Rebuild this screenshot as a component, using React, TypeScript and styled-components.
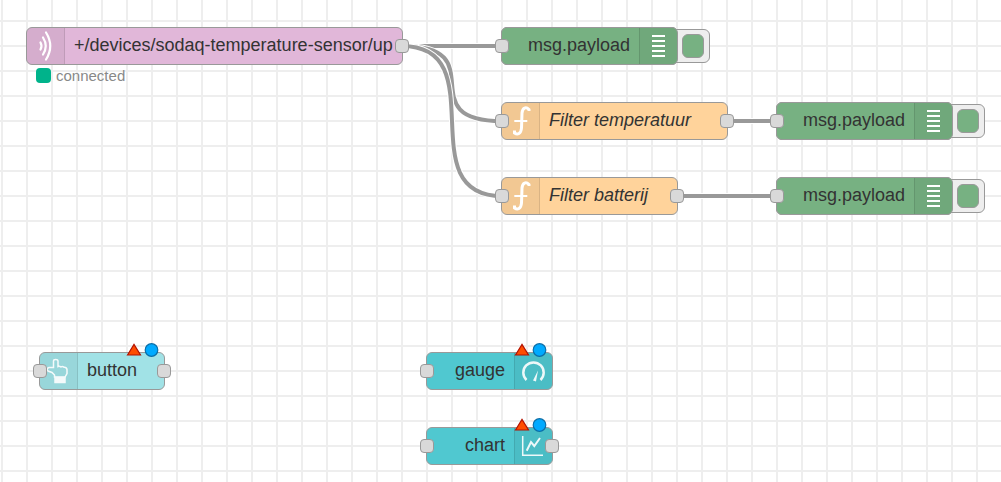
import React from 'react';
import styled, { createGlobalStyle, css } from 'styled-components';

const GlobalStyle = createGlobalStyle`
  html, body, #root { height: 100%; }
  body { margin: 0; background: #fff; }
  * { box-sizing: border-box; }
`;

const Workspace = styled.main`
  position: relative;
  min-height: 100%;
  overflow: hidden;
  font-family: "Liberation Sans", Arial, sans-serif;
  background-color: #fff;
  background-image:
    linear-gradient(to right, #eee 2px, transparent 2px),
    linear-gradient(to bottom, #eee 2px, transparent 2px);
  background-size: 25px 25px;
  background-position: 1px 20px;
`;

const Wires = styled.svg`
  position: absolute;
  inset: 0;
  width: 100%;
  height: 100%;
  fill: none;
`;

const NodeBox = styled.div<{ $x: number; $y: number; $w: number; $color: string }>`
  position: absolute;
  left: ${(p) => p.$x}px;
  top: ${(p) => p.$y}px;
  width: ${(p) => p.$w}px;
  height: 38px;
  display: flex;
  border: 1px solid #999;
  border-radius: 6px;
  background: ${(p) => p.$color};
`;

const IconPanel = styled.div<{ $right?: boolean }>`
  width: 38px;
  flex: none;
  display: flex;
  background: rgba(0, 0, 0, 0.05);
  order: ${(p) => (p.$right ? 1 : 0)};
  ${(p) =>
    p.$right
      ? css`box-shadow: inset 1px 0 rgba(0, 0, 0, 0.1); border-radius: 0 5px 5px 0;`
      : css`box-shadow: inset -1px 0 rgba(0, 0, 0, 0.1); border-radius: 5px 0 0 5px;`}
`;

const Glyph = styled.svg`
  display: block;
  width: 38px;
  height: 36px;
  fill: none;
  stroke: #fff;
`;

const Label = styled.span<{ $right?: boolean; $italic?: boolean }>`
  flex: 1;
  padding: 0 9px;
  line-height: 34px;
  font-size: 18px;
  color: #333;
  white-space: nowrap;
  text-align: ${(p) => (p.$right ? 'right' : 'left')};
  font-style: ${(p) => (p.$italic ? 'italic' : 'normal')};
`;

const Port = styled.span<{ $side: 'in' | 'out' }>`
  position: absolute;
  top: 11px;
  ${(p) => (p.$side === 'in' ? 'left: -7px;' : 'right: -7px;')}
  width: 14px;
  height: 14px;
  border: 1px solid #999;
  border-radius: 4px;
  background: #d9d9d9;
`;

const ToggleTab = styled.div`
  position: absolute;
  left: calc(100% - 6px);
  top: 1px;
  width: 39px;
  height: 34px;
  display: flex;
  justify-content: flex-end;
  align-items: center;
  padding-right: 5px;
  border: 1px solid #999;
  border-radius: 6px;
  background: #eee;
`;

const ToggleButton = styled.button<{ $color: string }>`
  width: 22px;
  height: 24px;
  padding: 0;
  border: 1px solid #999;
  border-radius: 6px;
  background: ${(p) => p.$color};
`;

const Badges = styled.svg`
  position: absolute;
  right: 4px;
  top: -11px;
  width: 34px;
  height: 16px;
`;

const Status = styled.div`
  position: absolute;
  left: 9px;
  top: 39px;
  display: flex;
  align-items: center;
  gap: 5px;
  font-size: 15px;
  line-height: 17px;
  color: #888;
  &::before {
    content: '';
    width: 15px;
    height: 15px;
    border-radius: 4px;
    background: #00b38b;
  }
`;

type IconName = 'mqtt' | 'debug' | 'function' | 'button' | 'gauge' | 'chart';

const icons: Record<IconName, React.ReactNode> = {
  mqtt: (
    <g strokeWidth="2.2" strokeLinecap="round">
      <path d="M13.5 14.5q2 3.500 0 7" />
      <path d="M16 9.500q5.500 8.500 0 17" />
      <path d="M19 4.500q8.500 13.500 0 27" />
    </g>
  ),
  debug: <path d="M13 8h13M13 13h13M13 18h13M13 23h13M13 28h13" strokeWidth="2" />,
  function: (
    <g strokeWidth="3">
      <path d="M27 8V6.500C24 3.500 20.500 4.500 20 10L19.500 25C19 31 15.500 32 12.500 30V27.500" />
      <path d="M12.300 18H25.300" strokeWidth="2" />
    </g>
  ),
  button: (
    <g strokeWidth="1.500" opacity="0.9">
      <path d="M14.500 24V22L12 19.500L8 18Q6 15.500 9 14.500H13.500V8Q13.500 6.500 15.700 6.500T18 8V13.500Q19.500 12.700 21 14Q22.500 13 24 14.300Q26.500 14 27 16.500V20.500L25 24Z" />
      <rect x="15" y="24.500" width="10" height="5" fill="#fff" />
    </g>
  ),
  gauge: (
    <g opacity="0.9">
      <path d="M12.500 27A10.200 10.200 0 1 1 26.500 27" strokeWidth="2.500" />
      <path d="M24 17.500L19 27.500L22 28.500Z" fill="#fff" stroke="none" />
    </g>
  ),
  chart: (
    <g strokeWidth="1.500" opacity="0.9">
      <path d="M8.700 8V27.300H29" />
      <path d="M12.700 22.700L17 14L20.300 18L26 10" strokeWidth="2" />
    </g>
  ),
};

interface FlowNode {
  label: string;
  icon: IconName;
  x: number;
  y: number;
  w: number;
  color: string;
  right?: boolean;
  italic?: boolean;
  input?: boolean;
  output?: boolean;
  toggle?: boolean;
  changed?: boolean;
  status?: string;
}

const GREEN = '#77b182';
const ORANGE = '#ffd39b';
const TEAL = '#50c8d0';

const nodes: FlowNode[] = [
  { label: '+/devices/sodaq-temperature-sensor/up', icon: 'mqtt', x: 26, y: 27, w: 377, color: '#e1b7d9', output: true, status: 'connected' },
  { label: 'msg.payload', icon: 'debug', x: 501, y: 27, w: 177, color: GREEN, right: true, input: true, toggle: true },
  { label: 'Filter temperatuur', icon: 'function', x: 501, y: 102, w: 227, color: ORANGE, italic: true, input: true, output: true },
  { label: 'msg.payload', icon: 'debug', x: 776, y: 102, w: 177, color: GREEN, right: true, input: true, toggle: true },
  { label: 'Filter batterij', icon: 'function', x: 501, y: 177, w: 177, color: ORANGE, italic: true, input: true, output: true },
  { label: 'msg.payload', icon: 'debug', x: 776, y: 177, w: 177, color: GREEN, right: true, input: true, toggle: true },
  { label: 'button', icon: 'button', x: 39, y: 352, w: 126, color: '#a1e2e6', input: true, output: true, changed: true },
  { label: 'gauge', icon: 'gauge', x: 426, y: 352, w: 127, color: TEAL, right: true, input: true, changed: true },
  { label: 'chart', icon: 'chart', x: 426, y: 427, w: 127, color: TEAL, right: true, input: true, output: true, changed: true },
];

const wires = [
  'M402 46H502',
  'M402 46C496 46 408 121 502 121',
  'M402 46C496 46 408 196 502 196',
  'M727 121H777',
  'M677 196H777',
];

function FlowNodeView({ node }: { node: FlowNode }) {
  return (
    <>
      {node.toggle && (
        <NodeBox $x={node.x} $y={node.y} $w={node.w} $color="transparent">
          <ToggleTab>
            <ToggleButton $color={node.color} aria-label="Toggle debug output" />
          </ToggleTab>
        </NodeBox>
      )}
      <NodeBox $x={node.x} $y={node.y} $w={node.w} $color={node.color}>
        <IconPanel $right={node.right}>
          <Glyph viewBox="0 0 38 36" aria-hidden="true">{icons[node.icon]}</Glyph>
        </IconPanel>
        <Label $right={node.right} $italic={node.italic}>{node.label}</Label>
        {node.input && <Port $side="in" />}
        {node.output && <Port $side="out" />}
        {node.changed && (
          <Badges viewBox="0 0 34 16" aria-hidden="true">
            <path d="M1.500 13L8 2.500L14.500 13Z" fill="#ff4d00" stroke="#b31200" strokeWidth="1.200" />
            <circle cx="25.500" cy="8" r="6.300" fill="#00aaff" stroke="#0a6ea8" strokeWidth="1.200" />
          </Badges>
        )}
        {node.status && <Status>{node.status}</Status>}
      </NodeBox>
    </>
  );
}

export default function App() {
  return (
    <>
      <GlobalStyle />
      <Workspace>
        <Wires aria-hidden="true">
          {wires.map((d) => (
            <g key={d}>
              <path d={d} stroke="#fff" strokeWidth="6" />
              <path d={d} stroke="#999" strokeWidth="4" />
            </g>
          ))}
        </Wires>
        {nodes.map((node) => (
          <FlowNodeView key={`${node.x}-${node.y}`} node={node} />
        ))}
      </Workspace>
    </>
  );
}
